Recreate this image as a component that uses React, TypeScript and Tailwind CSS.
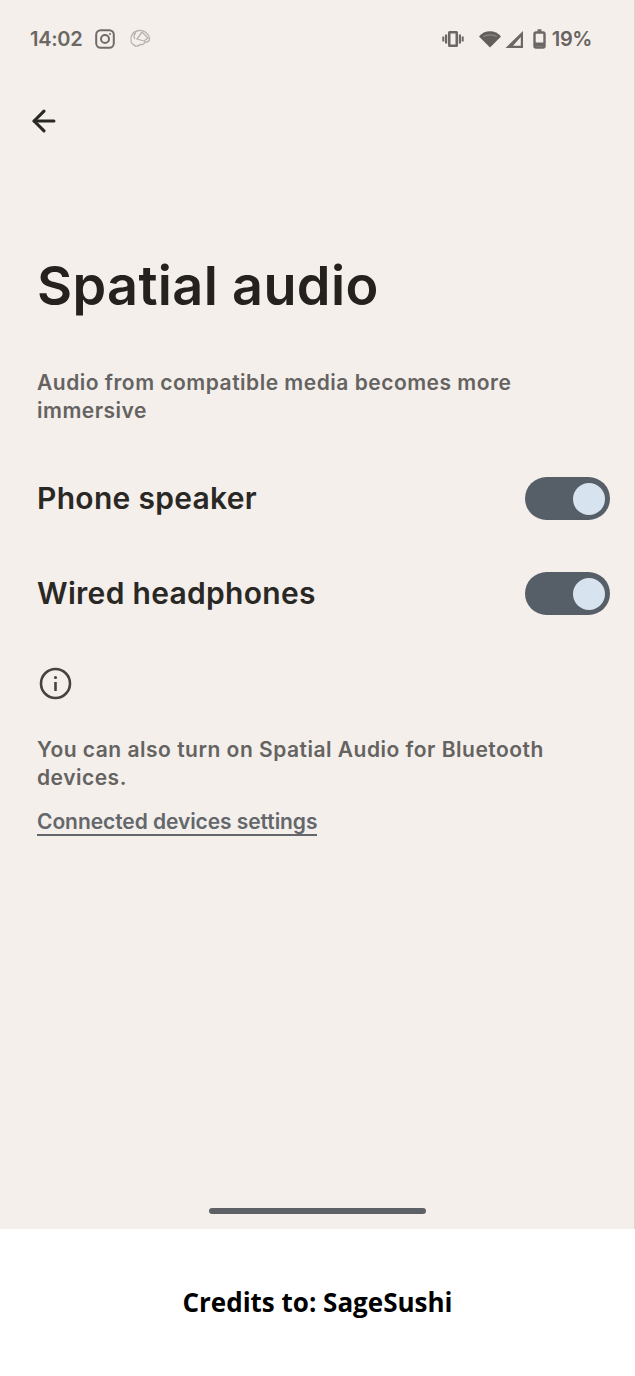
import { ArrowLeft } from "lucide-react";

function Toggle() {
  return (
    <div className="flex h-[43px] w-[85px] items-center justify-end rounded-full bg-[#565f67] pr-[5px]">
      <div className="h-8 w-8 rounded-full bg-[#d7e3ee]" />
    </div>
  );
}

function Row({ label }: { label: string }) {
  return (
    <div className="flex h-[43px] items-center justify-between">
      <span className="text-[30px] font-semibold tracking-[0.3px] text-[#2a2825]">{label}</span>
      <Toggle />
    </div>
  );
}

export default function App() {
  return (
    <div className="flex h-[1376px] w-[635px] flex-col bg-white font-['Inter',sans-serif]">
      <div className="flex h-[1229px] flex-col border-r border-[#d9d6d3] bg-[#f4efeb]">
        {/* status bar */}
        <div className="flex items-center justify-between pl-[30px] pr-[42px] pt-[27px]">
          <div className="flex items-center text-[#6a6764]">
            <span className="text-[20px] font-semibold leading-6 tracking-[-0.3px]">14:02</span>
            <svg className="ml-[13px]" width="20" height="20" viewBox="0 0 20 20" fill="none" stroke="#6f6c69" strokeWidth="2">
              <rect x="1.2" y="1.2" width="17.6" height="17.6" rx="4.5" />
              <circle cx="10" cy="10" r="4" />
              <circle cx="15" cy="5" r="0.6" fill="#6f6c69" strokeWidth="1" />
            </svg>
            <svg className="ml-[14px]" width="22" height="20" viewBox="0 0 22 20" fill="none" stroke="#b5b2af" strokeWidth="1.3">
              <path d="M2 12c-1-5 2-10 8-10.500 5-.5 10 3 10.500 8 .2 2.500-2 4-4.500 3.500-1 2.500-3 3-5 2.500-2 2.500-5 2-6.500 0-1.500-.5-2.300-2-2.500-3.500z" />
              <path d="M7 3.500c-2 2-2.500 4.500-1 6.500M13 3l-5 7 7 2M13 3l6 6-4 3" />
            </svg>
          </div>
          <div className="flex items-center text-[#666360]">
            <svg width="22" height="18" viewBox="0 0 22 18" fill="#6a6764">
              <path fillRule="evenodd" d="M7.500 1h7a1.500 1.500 0 0 1 1.500 1.500v13a1.500 1.500 0 0 1-1.500 1.500h-7A1.500 1.500 0 0 1 6 15.500v-13A1.500 1.500 0 0 1 7.500 1zM8.500 3.500v11h5v-11z" />
              <rect x="3" y="4.500" width="2.200" height="9" />
              <rect x="0.300" y="6.500" width="2" height="5" />
              <rect x="16.800" y="4.500" width="2.200" height="9" />
              <rect x="19.700" y="6.500" width="2" height="5" />
            </svg>
            <svg className="ml-[15px]" width="22" height="18" viewBox="0 0 23 18" fill="#615e5b">
              <path d="M11.500 18 0 6.500C3 3 7 1 11.500 1S20 3 23 6.500z" />
              <path d="M4.500 6.500c4-2.500 10-2.500 14 0" fill="none" stroke="#8b8885" strokeWidth="1.200" />
            </svg>
            <svg className="ml-[3px]" width="20" height="18" viewBox="0 0 18 18" fill="#6a6764">
              <path fillRule="evenodd" d="M0.500 18 18 1v17zM8 15.800h7.800V7z" />
            </svg>
            <svg className="ml-[9px]" width="13" height="20" viewBox="0 0 13 20" fill="none" stroke="#6a6764" strokeWidth="2.400">
              <rect x="1.500" y="3.500" width="10" height="15" rx="1.500" />
              <path d="M4.500 1.500h4" />
              <path d="M2 15.500h9" strokeWidth="4" />
            </svg>
            <span className="ml-[6px] text-[20px] font-semibold leading-6 tracking-[-0.4px]">19%</span>
          </div>
        </div>

        <ArrowLeft className="ml-[27px] mt-[53px] text-[#2a2825]" size={34} strokeWidth={2.200} />

        <h1 className="ml-[37px] mt-[116px] text-[54px] font-semibold leading-[64px] tracking-[0.35px] text-[#24211e]">
          Spatial audio
        </h1>

        <p className="ml-[37px] mt-[51px] w-[500px] text-[21px] font-semibold leading-[27.500px] tracking-[0.5px] text-[#656361]">
          Audio from compatible media becomes more immersive
        </p>

        <div className="ml-[37px] mr-[24px] mt-[53px] flex flex-col gap-[52px]">
          <Row label="Phone speaker" />
          <Row label="Wired headphones" />
        </div>

        <svg className="ml-[39px] mt-[52px]" width="33" height="33" viewBox="0 0 33 33" fill="none" stroke="#464340" strokeWidth="2.600">
          <circle cx="16.500" cy="16.500" r="14.500" />
          <path d="M16.500 15v9" />
          <circle cx="16.500" cy="10.500" r="0.800" fill="#464340" strokeWidth="1.500" />
        </svg>

        <p className="ml-[37px] mt-[36px] w-[530px] text-[21px] font-semibold leading-[27.500px] tracking-[0.5px] text-[#656361]">
          You can also turn on Spatial Audio for Bluetooth devices.
        </p>

        <a className="ml-[37px] mt-[19px] w-fit border-b-2 border-[#63676b] text-[21px] font-semibold leading-[24px] tracking-[-0.07px] text-[#63676b]">
          Connected devices settings
        </a>

        <div className="mx-auto mb-[15px] mt-auto h-[6px] w-[217px] rounded-full bg-[#5d6166]" />
      </div>

      <div className="flex flex-1 items-center justify-center font-['Open_Sans',sans-serif]">
        <span className="text-[26px] font-bold text-black">Credits to: SageSushi</span>
      </div>
    </div>
  );
}
